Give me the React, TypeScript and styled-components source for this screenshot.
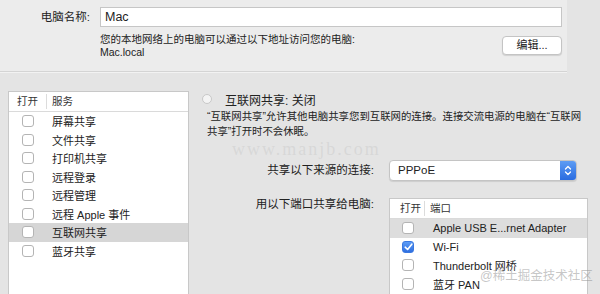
import * as React from 'react';
import styled, { createGlobalStyle } from 'styled-components';

const GlobalStyle = createGlobalStyle`
  html, body {
    margin: 0;
    padding: 0;
    width: 600px;
    height: 294px;
    overflow: hidden;
    background: #e4e4e4;
    font-family: "Liberation Sans", "Noto Sans CJK SC", sans-serif;
    color: #222;
  }
`;

const Page = styled.div`
  position: relative;
  width: 600px;
  height: 294px;
  overflow: hidden;
`;

const TopPanel = styled.div`
  width: 567px;
  height: 72px;
  box-sizing: border-box;
  padding-top: 7px;
  background: #ececec;
  border-bottom: 1px solid #d4d4d4;
  box-shadow: 0 1px 0 #f2f2f2;
  display: grid;
  grid-template-columns: 90px 462px;
  column-gap: 10px;
  align-content: start;
`;

const FieldLabel = styled.div`
  font-size: 11.5px;
  line-height: 20px;
  text-align: right;
`;

const NameInput = styled.div`
  height: 20px;
  box-sizing: border-box;
  background: #fff;
  border: 1px solid #c6c6c6;
  font-size: 12.5px;
  line-height: 18px;
  padding-left: 4px;
`;

const AddressRow = styled.div`
  grid-column: 2;
  display: flex;
  justify-content: space-between;
  align-items: flex-start;
  margin-top: 6px;
`;

const Hint = styled.div`
  font-size: 10.5px;
  line-height: 13px;
`;

const PushButton = styled.div`
  width: 60px;
  height: 19px;
  margin-top: 3px;
  box-sizing: border-box;
  background: #fff;
  border: 1px solid #c4c4c4;
  border-radius: 4px;
  box-shadow: 0 1px 1px rgba(0, 0, 0, 0.12);
  font-size: 11px;
  line-height: 17px;
  text-align: center;
`;

const Lower = styled.div`
  display: flex;
  padding: 19px 0 0 8px;
`;

const ServiceList = styled.div`
  width: 181px;
  height: 210px;
  box-sizing: border-box;
  background: #fff;
  border: 1px solid #c8c8c8;
  flex-shrink: 0;
`;

const HeaderRow = styled.div`
  display: flex;
  height: 20px;
  border-bottom: 1px solid #dadada;
  box-sizing: border-box;
  font-size: 10.5px;
  color: #333;
`;

const HeadCell = styled.div<{ $w?: number; $pad: number; $sep?: boolean }>`
  width: ${p => (p.$w ? `${p.$w}px` : 'auto')};
  flex: ${p => (p.$w ? 'none' : '1')};
  padding-left: ${p => p.$pad}px;
  box-sizing: border-box;
  border-right: ${p => (p.$sep ? '1px solid #dcdcdc' : 'none')};
  margin: ${p => (p.$sep ? '2px 0' : '0')};
  line-height: ${p => (p.$sep ? '15px' : '19px')};
`;

const Row = styled.div<{ $selected?: boolean; $tone: string }>`
  display: flex;
  align-items: center;
  height: 18.5px;
  background: ${p => (p.$selected ? p.$tone : 'transparent')};
  font-size: 11px;
  white-space: nowrap;
`;

const CheckCell = styled.div<{ $w: number; $pad: number }>`
  width: ${p => p.$w}px;
  padding-left: ${p => p.$pad}px;
  box-sizing: border-box;
  display: flex;
  align-items: center;
`;

const Box = styled.div<{ $on?: boolean }>`
  width: 12px;
  height: 12px;
  box-sizing: border-box;
  border-radius: 3px;
  border: 1px solid ${p => (p.$on ? '#3a78e0' : '#b4b4b4')};
  background: ${p => (p.$on ? 'linear-gradient(#5c9cf5, #2f6fe0)' : '#fff')};
  display: flex;
  align-items: center;
  justify-content: center;
`;

const RowText = styled.div`
  padding-left: 0;
`;

const RightCol = styled.div`
  flex: 1;
  padding-left: 13px;
  display: flex;
  flex-direction: column;
`;

const StatusRow = styled.div`
  display: flex;
  align-items: center;
  height: 16px;
  gap: 13px;
  font-size: 12px;
`;

const Radio = styled.div`
  width: 10px;
  height: 10px;
  border-radius: 50%;
  box-sizing: border-box;
  border: 1px solid #c8c8c8;
  background: #f4f4f4;
`;

const Description = styled.div`
  margin: 2px 0 0 5px;
  font-size: 10.4px;
  line-height: 15px;
  white-space: nowrap;
`;

const FormRow = styled.div<{ $top: number }>`
  display: flex;
  align-items: flex-start;
  margin-top: ${p => p.$top}px;
`;

const FormLabel = styled.div<{ $lh: number; $shift: number }>`
  width: 172px;
  text-align: right;
  font-size: 11.5px;
  line-height: ${p => p.$lh}px;
  margin-top: ${p => p.$shift}px;
  margin-right: 15px;
  flex-shrink: 0;
`;

const Popup = styled.div`
  width: 188px;
  height: 21px;
  box-sizing: border-box;
  display: flex;
  background: #fff;
  border: 1px solid #c4c4c4;
  border-radius: 4px;
  box-shadow: 0 1px 1px rgba(0, 0, 0, 0.1);
  overflow: hidden;
`;

const PopupValue = styled.div`
  flex: 1;
  font-size: 11.5px;
  line-height: 19px;
  padding-left: 8px;
`;

const Stepper = styled.div`
  width: 16px;
  background: linear-gradient(#5d9cf4, #2a6ce0);
  display: flex;
  align-items: center;
  justify-content: center;
`;

const PortTable = styled.div`
  width: 199px;
  height: 110px;
  box-sizing: border-box;
  background: #fff;
  border: 1px solid #c8c8c8;
  border-bottom: none;
  overflow: hidden;
`;

const Watermark = styled.div`
  position: absolute;
  font-size: 12.5px;
  color: rgba(150, 150, 150, 0.55);
  pointer-events: none;
  white-space: nowrap;
`;

const FaintMark = styled(Watermark)`
  font-family: "Liberation Serif", serif;
  font-size: 18px;
  color: rgba(200, 200, 200, 0.45);
  letter-spacing: 2px;
`;

const services = ['屏幕共享', '文件共享', '打印机共享', '远程登录', '远程管理', '远程 Apple 事件', '互联网共享', '蓝牙共享'];

const ports = [
  { name: 'Apple USB E...rnet Adapter', on: false },
  { name: 'Wi-Fi', on: true },
  { name: 'Thunderbolt 网桥', on: false },
  { name: '蓝牙 PAN', on: false },
];

const Tick = () => (
  <svg width="9" height="8" viewBox="0 0 9 8">
    <path d="M1.2 4.2 L3.6 6.5 L7.8 1.2" fill="none" stroke="#fff" strokeWidth="1.6" strokeLinecap="round" strokeLinejoin="round" />
  </svg>
);

const Arrows = () => (
  <svg width="8" height="11" viewBox="0 0 8 11">
    <path d="M1.5 4 L4 1.5 L6.5 4 M1.5 7 L4 9.5 L6.5 7" fill="none" stroke="#fff" strokeWidth="1.3" strokeLinecap="round" strokeLinejoin="round" />
  </svg>
);

export default function App() {
  return (
    <Page>
      <GlobalStyle />
      <TopPanel>
        <FieldLabel>电脑名称:</FieldLabel>
        <NameInput>Mac</NameInput>
        <AddressRow>
          <Hint>
            您的本地网络上的电脑可以通过以下地址访问您的电脑:
            <br />
            Mac.local
          </Hint>
          <PushButton>编辑...</PushButton>
        </AddressRow>
      </TopPanel>

      <Lower>
        <ServiceList>
          <HeaderRow>
            <HeadCell $w={38} $pad={8} $sep>打开</HeadCell>
            <HeadCell $pad={5}>服务</HeadCell>
          </HeaderRow>
          {services.map(s => (
            <Row key={s} $selected={s === '互联网共享'} $tone="#d6d6d6">
              <CheckCell $w={43} $pad={13}>
                <Box />
              </CheckCell>
              <RowText>{s}</RowText>
            </Row>
          ))}
        </ServiceList>

        <RightCol>
          <StatusRow>
            <Radio />
            <span>互联网共享: 关闭</span>
          </StatusRow>
          <Description>
            “互联网共享”允许其他电脑共享您到互联网的连接。连接交流电源的电脑在“互联网
            <br />
            共享”打开时不会休眠。
          </Description>

          <FormRow $top={21}>
            <FormLabel $lh={21} $shift={0}>共享以下来源的连接:</FormLabel>
            <Popup>
              <PopupValue>PPPoE</PopupValue>
              <Stepper>
                <Arrows />
              </Stepper>
            </Popup>
          </FormRow>

          <FormRow $top={17}>
            <FormLabel $lh={14} $shift={-1}>用以下端口共享给电脑:</FormLabel>
            <PortTable>
              <HeaderRow>
                <HeadCell $w={35} $pad={10} $sep>打开</HeadCell>
                <HeadCell $pad={5}>端口</HeadCell>
              </HeaderRow>
              {ports.map(p => (
                <Row key={p.name} $selected={p.name.startsWith('Apple')} $tone="#dddddd">
                  <CheckCell $w={43} $pad={12}>
                    <Box $on={p.on}>{p.on && <Tick />}</Box>
                  </CheckCell>
                  <RowText>{p.name}</RowText>
                </Row>
              ))}
            </PortTable>
          </FormRow>
        </RightCol>
      </Lower>

      <FaintMark style={{ left: 232, top: 139 }}>www.manjb.com</FaintMark>
      <Watermark style={{ left: 480, top: 265 }}>@稀土掘金技术社区</Watermark>
    </Page>
  );
}
